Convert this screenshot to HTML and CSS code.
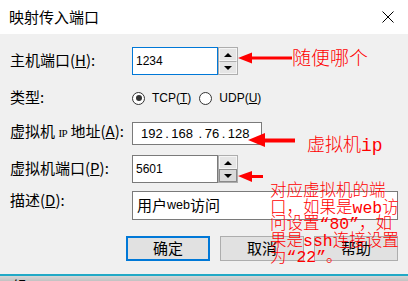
FILE: index.html
```html
<!DOCTYPE html>
<html>
    <head>
        <title>映射传入端口</title>
        <meta charset="utf-8">
        <link rel="stylesheet" href="styles.css">
    </head>
    <body>
        <div class="window">
            <div class="titlebar">
                <span class="title">映射传入端口</span>
                <svg class="close" width="12" height="12" viewBox="0 0 12 12">
                    <path d="M0.5 0.5 L11.5 11.5 M11.5 0.5 L0.5 11.5" stroke="#000" stroke-width="1" fill="none"/>
                </svg>
            </div>
            <div class="dialog">
                <div class="row row-host">
                    <div class="label">主机端口(<u>H</u>):</div>
                    <div class="edit edit-port focused">1234</div>
                    <div class="spin">
                        <div class="spin-btn"><span class="tri-up"></span></div>
                        <div class="spin-btn spin-down"><span class="tri-down"></span></div>
                    </div>
                </div>
                <div class="row row-type">
                    <div class="label">类型:</div>
                    <div class="radio-item">
                        <span class="radio checked"></span>
                        <span class="radio-text">TCP(<u>T</u>)</span>
                    </div>
                    <div class="radio-item">
                        <span class="radio"></span>
                        <span class="radio-text">UDP(<u>U</u>)</span>
                    </div>
                </div>
                <div class="row row-ip">
                    <div class="label">虚拟机 <span class="small">IP</span> 地址(<u>A</u>):</div>
                    <div class="edit edit-ip">
                        <span class="octet">192</span><span class="dot">.</span><span class="octet">168</span><span class="dot dot-wide">.</span><span class="octet">76</span><span class="dot">.</span><span class="octet last">128</span>
                    </div>
                </div>
                <div class="row row-vport">
                    <div class="label">虚拟机端口(<u>P</u>):</div>
                    <div class="edit edit-port">5601</div>
                    <div class="spin">
                        <div class="spin-btn"><span class="tri-up"></span></div>
                        <div class="spin-btn spin-down hot"><span class="tri-down"></span></div>
                    </div>
                </div>
                <div class="row row-desc">
                    <div class="label">描述(<u>D</u>):</div>
                    <div class="edit edit-desc">用户<span class="latin">web</span>访问</div>
                </div>
                <div class="buttons">
                    <div class="button default">确定</div>
                    <div class="button">取消</div>
                    <div class="button">帮助</div>
                </div>
            </div>
            <div class="taskbar"><span class="taskbar-text">二组</span></div>

            <svg class="arrows" width="408" height="281" viewBox="0 0 408 281">
                <line x1="249" y1="58" x2="292" y2="58" stroke="#f00" stroke-width="3"/>
                <polygon points="238,58 252,52.5 252,63.5" fill="#f00"/>
                <line x1="260" y1="140.5" x2="295" y2="140.5" stroke="#f00" stroke-width="4"/>
                <polygon points="248,140 265,133 265,147" fill="#f00"/>
                <line x1="249" y1="176.5" x2="263" y2="176.5" stroke="#f00" stroke-width="3"/>
                <polygon points="238,176 252,171 252,182" fill="#f00"/>
            </svg>
            <div class="note note-host">随便哪个</div>
            <div class="note note-ip">虚拟机ip</div>
            <div class="note note-port">对应虚拟机的端<br>口，如果是web访<br>问设置“80”，如<br>果是ssh连接设置<br>为“22”。</div>
        </div>
    </body>
</html>
```

FILE: styles.css
```css
        html, body {
            margin: 0;
            padding: 0;
            overflow: hidden;
        }
        .window {
            position: relative;
            width: 408px;
            height: 281px;
            overflow: hidden;
            background: #F0F0F0;
            font-family: "Noto Sans CJK SC", sans-serif;
            color: #000;
        }
        .titlebar {
            display: flex;
            align-items: center;
            justify-content: space-between;
            height: 34px;
            padding: 0 14px 0 9px;
            background: #FFF;
        }
        .title {
            font-size: 15px;
            line-height: 18px;
        }
        .close {
            display: block;
        }
        .dialog {
            height: 240px;
            padding: 13px 10px 0 10px;
            box-sizing: border-box;
        }
        .row {
            display: flex;
            align-items: center;
        }
        .label {
            width: 122px;
            flex: none;
            font-size: 15px;
            line-height: 18px;
            padding-bottom: 3px;
            white-space: nowrap;
        }
        .label .small {
            font-family: "Liberation Serif", serif;
            font-size: 11px;
            letter-spacing: -0.5px;
        }
        .row-host {
            height: 28px;
        }
        .row-type {
            height: 18px;
            margin-top: 14px;
        }
        .row-ip {
            height: 23px;
            margin-top: 15px;
        }
        .row-vport {
            height: 28px;
            margin-top: 10px;
        }
        .row-desc {
            height: 29px;
            margin-top: 8px;
            align-items: flex-start;
        }
        .edit {
            height: 100%;
            box-sizing: border-box;
            background: #FFF;
            border: 1px solid #7A7A7A;
            display: flex;
            align-items: center;
            font-family: "Liberation Sans", sans-serif;
            font-size: 12px;
        }
        .edit-port {
            width: 86px;
            padding-left: 3px;
        }
        .focused {
            border-color: #0078D7;
        }
        .edit-ip {
            width: 130px;
            padding-left: 8px;
            font-size: 13px;
        }
        .octet, .dot {
            margin-right: 2.5px;
        }
        .dot-wide {
            margin-left: 3px;
        }
        .octet.last {
            margin-right: 0;
        }
        .edit-desc {
            width: 266px;
            padding-left: 4px;
            font-family: "Noto Sans CJK SC", sans-serif;
            font-size: 15px;
            padding-bottom: 3px;
        }
        .edit-desc .latin {
            font-family: "Liberation Sans", sans-serif;
            font-size: 12.5px;
            padding-top: 2px;
        }
        .spin {
            width: 20px;
            height: 100%;
            box-sizing: border-box;
            border: 1px solid #ADADAD;
            display: flex;
            flex-direction: column;
            background: #E5E5E5;
        }
        .spin-btn {
            flex: 1;
            display: flex;
            align-items: center;
            justify-content: center;
            border: 1px solid #F5F5F5;
        }
        .spin-down {
            border-top: 1px solid #ADADAD;
        }
        .spin-down.hot {
            border: 1px solid #8A8A8A;
            background: #DADADA;
        }
        .tri-up {
            width: 0;
            height: 0;
            border-left: 4px solid transparent;
            border-right: 4px solid transparent;
            border-bottom: 4px solid #000;
        }
        .tri-down {
            width: 0;
            height: 0;
            border-left: 4px solid transparent;
            border-right: 4px solid transparent;
            border-top: 4px solid #000;
        }
        .radio-item {
            display: flex;
            align-items: center;
            gap: 7px;
            margin-right: 8px;
            font-family: "Liberation Sans", sans-serif;
            font-size: 12px;
        }
        .radio {
            position: relative;
            width: 13px;
            height: 13px;
            box-sizing: border-box;
            border: 1px solid #333;
            border-radius: 50%;
            background: #FFF;
        }
        .radio.checked:after {
            content: '';
            position: absolute;
            left: 2.5px;
            top: 2.5px;
            width: 6px;
            height: 6px;
            border-radius: 50%;
            background: #333;
        }
        .buttons {
            display: flex;
            justify-content: flex-end;
            gap: 10px;
            margin-top: 16px;
        }
        .button {
            width: 84px;
            height: 25px;
            box-sizing: border-box;
            border: 1px solid #ADADAD;
            background: #E1E1E1;
            display: flex;
            align-items: center;
            justify-content: center;
            font-size: 15px;
            padding-bottom: 2px;
        }
        .button.default {
            border: 2px solid #0078D7;
        }
        .taskbar {
            height: 7px;
            box-sizing: border-box;
            border-top: 2px solid #22A9C6;
            background: linear-gradient(#D6D6D6, #C2C2C2);
            overflow: hidden;
        }
        .taskbar-text {
            display: block;
            margin-left: -3px;
            font-size: 15px;
            line-height: 20px;
        }
        .arrows {
            position: absolute;
            left: 0;
            top: 0;
        }
        .note {
            position: absolute;
            color: #F00;
            font-family: "Liberation Mono", "Noto Sans CJK SC", monospace;
            font-weight: 300;
            white-space: nowrap;
        }
        .note-host {
            left: 292px;
            top: 51px;
            font-size: 19px;
            line-height: 19px;
        }
        .note-ip {
            left: 307px;
            top: 137px;
            font-size: 18px;
            line-height: 18px;
        }
        .note-port {
            left: 270px;
            top: 184px;
            font-size: 16.5px;
            line-height: 16.5px;
        }
```
